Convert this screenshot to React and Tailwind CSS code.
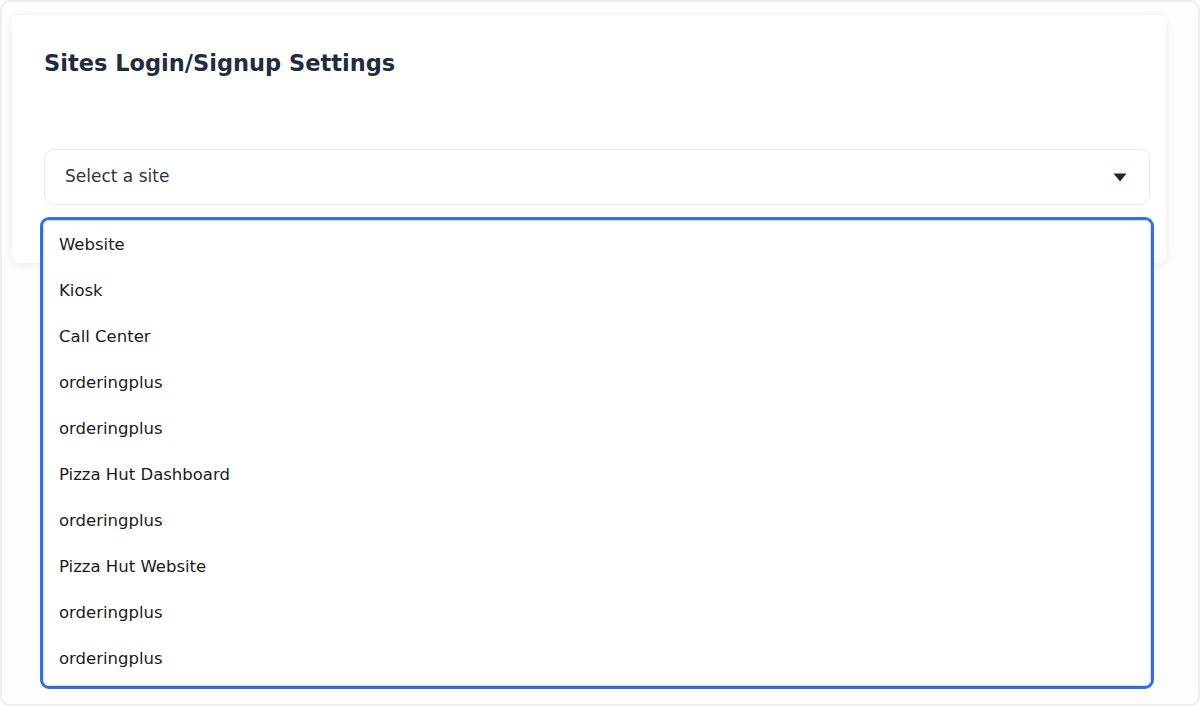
const sites = [
  'Website',
  'Kiosk',
  'Call Center',
  'orderingplus',
  'orderingplus',
  'Pizza Hut Dashboard',
  'orderingplus',
  'Pizza Hut Website',
  'orderingplus',
  'orderingplus',
];

const SiteSelect = () => {
  return (
    <div className="relative">
      <button className="w-full h-[56px] flex items-center justify-between pl-5 pr-[22px] rounded-[10px] border border-[#e6e8ec] bg-white text-left">
        <span className="text-[17px] text-[#2a3547]">Select a site</span>
        <svg width="14" height="9" viewBox="0 0 14 9">
          <path d="M0.5 0.5 L13.5 0.5 L7 8.5 Z" fill="#1e293b" />
        </svg>
      </button>
      <div className="absolute left-[-4px] right-[-4px] top-[68px] z-10 rounded-[9px] border-[3px] border-[#3471e8] bg-white">
        <ul className="rounded-[6px] border border-[#dcdde2] pb-1 shadow-sm">
          {sites.map((site, i) => (
            <li key={i} className="h-[46px] flex items-center pl-[15px] pt-[2px] text-[16.5px] text-[#1a1a1a]">
              {site}
            </li>
          ))}
        </ul>
      </div>
    </div>
  );
};

export default function App() {
  return (
    <div className="w-[1200px] h-[706px] bg-white" style={{ fontFamily: '"DejaVu Sans", "Liberation Sans", sans-serif' }}>
      <div className="h-full rounded-[10px] border-2 border-[#ededf2] bg-[#fdfdfe] pl-[10px] pt-[13px]">
        <div className="w-[1154px] h-[248px] rounded-[8px] bg-white shadow-[0_2px_10px_rgba(0,0,0,0.08)] pl-8 pr-4 pt-[36px]">
          <h1 className="text-[22.5px] font-bold text-[#1f2d3f] leading-[24px]">
            Sites Login/Signup Settings
          </h1>
          <div className="mt-[74px]">
            <SiteSelect />
          </div>
        </div>
      </div>
    </div>
  );
}
